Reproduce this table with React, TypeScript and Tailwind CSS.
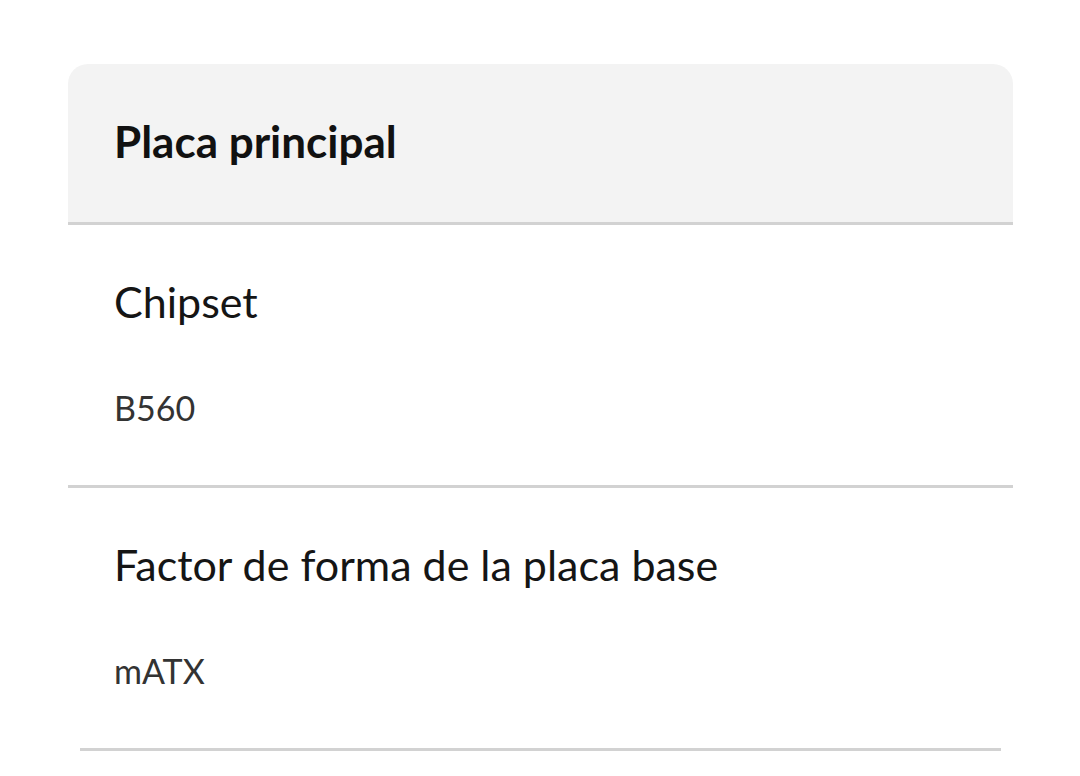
import React from 'react';

const specs = [
  { label: 'Chipset', value: 'B560' },
  { label: 'Factor de forma de la placa base', value: 'mATX' },
];

export default function App() {
  return (
    <div
      className="w-[1080px] h-[776px] bg-white overflow-hidden pt-16 pl-[68px]"
      style={{ fontFamily: 'Lato, "Noto Sans", sans-serif' }}
    >
      <div className="w-[945px]">
        {/* Header */}
        <div className="h-[161px] bg-[#f3f3f3] rounded-t-[20px] border-b-[3px] border-[#d2d2d2] flex items-center pl-[46px] pb-[4px]">
          <h2 className="text-[44px] font-bold text-[#111] leading-none">Placa principal</h2>
        </div>

        {/* Rows */}
        {specs.map((spec, i) => (
          <div key={spec.label}>
            <div className="pl-[46px] pt-[53px] pb-[57px]">
              <div className="text-[43px] leading-[48px] text-[#151515]">{spec.label}</div>
              <div className="mt-[62px] text-[34px] leading-[40px] text-[#333]">{spec.value}</div>
            </div>
            <div
              className={
                i === specs.length - 1
                  ? 'mx-3 h-[3px] bg-[#d2d2d2]'
                  : 'h-[3px] bg-[#d2d2d2]'
              }
            />
          </div>
        ))}
      </div>
    </div>
  );
}
